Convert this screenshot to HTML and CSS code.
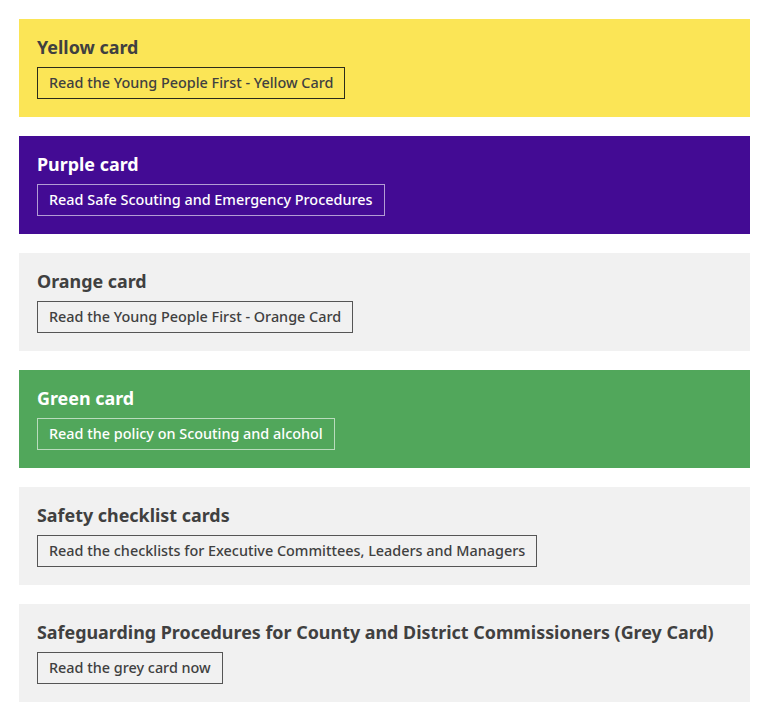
FILE: index.html
```html
<html>
    <head>
        <meta name="viewport" content="width=device-width, initial-scale=1">
        <link rel="stylesheet" href="styles.css">
    </head>
    <body>
        <div class="cards">
            <div class="card yellow">
                <h3>Yellow card</h3>
                <a class="btn" href="#">Read the Young People First - Yellow Card</a>
            </div>
            <div class="card purple">
                <h3>Purple card</h3>
                <a class="btn" href="#">Read Safe Scouting and Emergency Procedures</a>
            </div>
            <div class="card grey">
                <h3>Orange card</h3>
                <a class="btn" href="#">Read the Young People First - Orange Card</a>
            </div>
            <div class="card green">
                <h3>Green card</h3>
                <a class="btn" href="#">Read the policy on Scouting and alcohol</a>
            </div>
            <div class="card grey">
                <h3>Safety checklist cards</h3>
                <a class="btn" href="#">Read the checklists for Executive Committees, Leaders and Managers</a>
            </div>
            <div class="card grey">
                <h3>Safeguarding Procedures for County and District Commissioners (Grey Card)</h3>
                <a class="btn" href="#">Read the grey card now</a>
            </div>
        </div>
    </body>
</html>
```

FILE: styles.css
```css
body{
    margin: 0; background: #fff;
    font-family: "Noto Sans", "Lato", sans-serif;
}
.cards{
    display: flex; flex-direction: column; gap: 19px;
    padding: 19px 18px 0 19px;
}
.card{
    padding: 16px 18px 18px 18px;
    color: #404040;
}
.card h3{
    margin: 0 0 8px 0;
    font-size: 17.9px; line-height: 24px; font-weight: 700;
}
.btn{
    display: inline-block;
    height: 30px; line-height: 30px;
    padding: 0 11px;
    border: 1px solid #404040;
    font-size: 14.4px; font-weight: 500;
    color: #404040; text-decoration: none;
}
.yellow{ background: #fbe556; }
.yellow .btn{ border-color: #2b2b1a; }
.purple{ background: #430b94; color: #fff; }
.purple .btn, .green .btn{ color: #fff; border-color: rgba(255,255,255,0.6); }
.green{ background: #51a75b; color: #fff; }
.grey{ background: #f1f1f1; }
.grey .btn{ border-color: #555; }
```
